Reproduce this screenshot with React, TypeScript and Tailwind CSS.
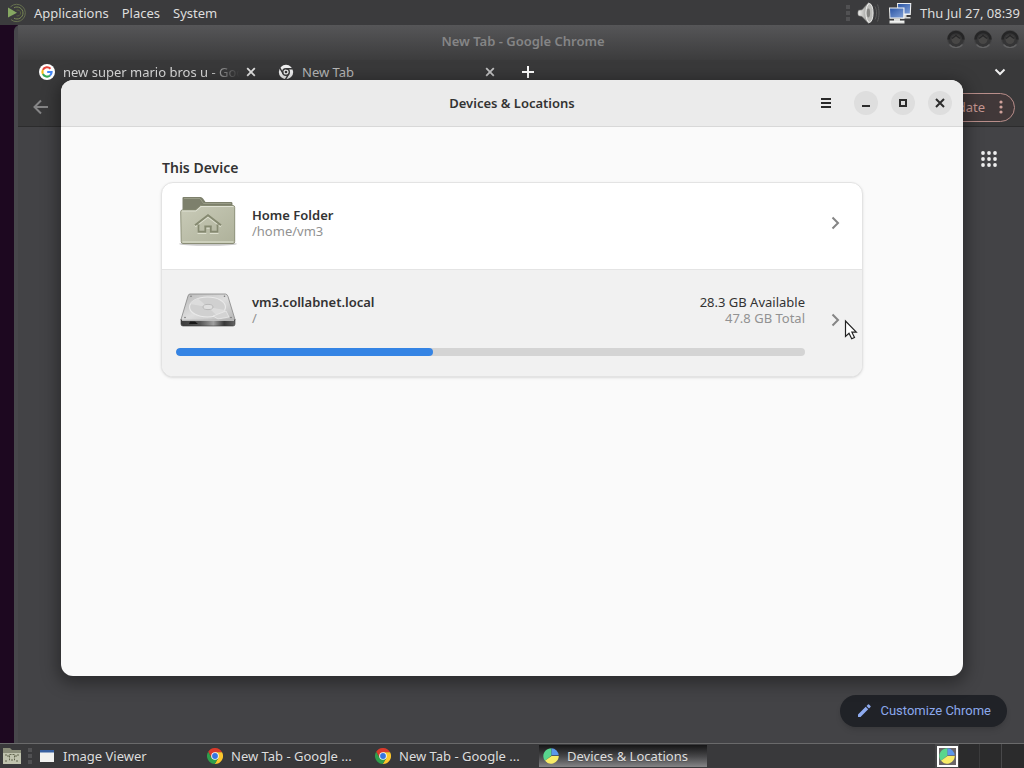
import type { ReactNode } from "react";

function ChromeLogo() {
  return (
    <svg viewBox="0 0 16 16" className="size-4 shrink-0" aria-hidden="true">
      <path d="M8 8 4.710 9.900 1.190 3.800A8 8 0 0 1 15.050 4.200H8Z" fill="#d93a2b" />
      <path d="M8 8V4.200H15.050A8 8 0 0 1 7.770 16L11.290 9.900Z" fill="#fcc62d" />
      <path d="M8 8 11.290 9.900 7.770 16A8 8 0 0 1 1.190 3.800L4.710 9.900Z" fill="#2f9e4b" />
      <circle cx="8" cy="8" r="3.8" fill="#f6f8fb" />
      <circle cx="8" cy="8" r="2.9" fill="#3474e0" />
    </svg>
  );
}

function MonoChromeLogo() {
  return (
    <svg viewBox="0 0 16 16" className="size-4 shrink-0" aria-hidden="true">
      <circle cx="8" cy="8" r="7.2" fill="#f1f1f1" />
      <circle cx="8" cy="8" r="3.3" fill="#f1f1f1" stroke="#3a3a3b" strokeWidth="1.4" />
      <path d="M8 4.700H15M10.860 9.650 7.360 15.700M5.140 9.650 1.640 3.600" stroke="#3a3a3b" strokeWidth="1.400" />
      <circle cx="8" cy="8" r="1.300" fill="#3a3a3b" />
    </svg>
  );
}

function GoogleLogo() {
  return (
    <svg viewBox="0 0 16 16" className="size-4 shrink-0" aria-hidden="true">
      <circle cx="8" cy="8" r="8" fill="#fff" />
      <g fill="none" strokeWidth="2.1">
        <path d="M11.5 4.8A4.6 4.6 0 0 0 3.9 5.9" stroke="#e5443a" />
        <path d="M3.9 5.9A4.6 4.6 0 0 0 3.9 10.1" stroke="#f7bb18" />
        <path d="M3.9 10.1A4.6 4.6 0 0 0 11 11.5" stroke="#36a854" />
        <path d="M11 11.5A4.6 4.6 0 0 0 12.6 8H8.2" stroke="#4285f4" />
      </g>
    </svg>
  );
}

function MenuLogo() {
  return (
    <svg viewBox="0 0 22 20" className="h-5 w-[22px]" fill="none" aria-hidden="true">
      <path d="M4.5 3.8A8.7 8.7 0 1 1 5 16.6" stroke="#66704f" strokeWidth="1" />
      <path d="M8 4.8A6 6 0 1 1 8 15.2" stroke="#7b8b55" strokeWidth="1" />
      <path d="M10.5 7.2A3 3 0 1 1 10.5 12.8" stroke="#59633f" strokeWidth="1" />
      <path d="M2 4.500V14.500L11 9.800Z" fill="#86a862" />
    </svg>
  );
}

function SpeakerIcon() {
  return (
    <svg viewBox="0 0 24 24" className="size-6" aria-hidden="true">
      <defs>
        <linearGradient id="cone" x1="0" x2="1">
          <stop offset="0" stopColor="#f2f2f0" />
          <stop offset="0.6" stopColor="#a9a9a6" />
          <stop offset="1" stopColor="#e2e2e0" />
        </linearGradient>
      </defs>
      <path d="M2.5 9.2 6 8.8 12.5 1.5C16.5 4 16.5 20 12.5 22.5L6 15.5 2.5 14.8C1.6 13 1.6 11 2.5 9.2Z" fill="url(#cone)" stroke="#6d6d6b" strokeWidth=".6" />
      <ellipse cx="13.500" cy="12" rx="3.600" ry="9.400" fill="#bcbcb9" stroke="#f5f5f4" strokeWidth=".9" />
      <ellipse cx="12.400" cy="12" rx="1.700" ry="4.400" fill="#858582" />
      <path d="M19 5.500C21 9 21 15 19 18.500M21.500 3.500C23.500 8.500 23.500 15.500 21.500 20.500" fill="none" stroke="#5c5c5c" />
    </svg>
  );
}

function NetworkIcon() {
  return (
    <svg viewBox="0 0 24 24" className="size-6" aria-hidden="true">
      <defs>
        <linearGradient id="screen" x1="0" x2="1" y1="0" y2="1">
          <stop offset="0" stopColor="#2b55a5" />
          <stop offset="1" stopColor="#7f9fd6" />
        </linearGradient>
      </defs>
      <path d="M9 2H23.3L22.8 14H9.5Z" fill="#f0f1f1" />
      <path d="M10 3H22.2L21.8 12.5H10.4Z" fill="url(#screen)" />
      <path d="M14 14H18.5V16H22.5V17.6H13Z" fill="#d4d5d3" />
      <path d="M1 6.5H16.5V17.8H1.5Z" fill="#f3f4f3" />
      <path d="M2 7.5H15.4L15.2 16.4H2.4Z" fill="url(#screen)" />
      <path d="M6 17.8H12V19.6H16.5V22.4H1.5V19.6H6Z" fill="#dedfdd" />
      <path d="M2 20.2H16V21H2Z" fill="#f8f8f8" />
    </svg>
  );
}

function HomeFolderIcon() {
  return (
    <svg viewBox="0 0 64 64" className="size-16" aria-hidden="true">
      <defs>
        <linearGradient id="folder" x1="0" x2="1" y1="0" y2="1">
          <stop offset="0" stopColor="#c9cbb8" />
          <stop offset="1" stopColor="#aeb19a" />
        </linearGradient>
      </defs>
      <ellipse cx="32" cy="53" rx="29" ry="1.800" fill="#000" opacity=".22" />
      <path d="M6.500 7Q6.500 6 7.500 6H24.500Q26 6 27 7.500L29.500 11H55.500Q56.500 11 56.500 12.500V30H6.500Z" fill="#7d806c" />
      <path d="M8 7.500H24L27.500 12.500H55" fill="none" stroke="#999c87" />
      <path d="M4.700 20.500Q4.700 19 6.500 19H19.500L24.500 14.500H57Q58.700 14.500 58.700 16.500V50.500Q58.700 52.500 57 52.500H7Q5.200 52.500 5.200 50.500Z" fill="url(#folder)" stroke="#85886f" strokeWidth=".9" />
      <path d="M6 20H20L25 15.500H57.500" fill="none" stroke="#e0e2d4" />
      <path d="M6.500 51H57.500" stroke="#d5d8c5" strokeWidth="1.300" />
      <path d="M19 34.200 32 24.200 45 34.200M22.500 33.500V40.800H29.300V35.500H34.800V40.800H41.500V33.500" transform="translate(0 1.200)" fill="none" stroke="#dddfce" strokeWidth="2" />
      <path d="M19 34.200 32 24.200 45 34.200M22.500 33.500V40.800H29.300V35.500H34.800V40.800H41.500V33.500" fill="none" stroke="#858970" strokeWidth="2" />
    </svg>
  );
}

function DriveIcon() {
  return (
    <svg viewBox="0 0 64 64" className="size-16" aria-hidden="true">
      <defs>
        <linearGradient id="plate" x1="0" x2="1" y1="0" y2="1">
          <stop offset="0" stopColor="#b8b8b8" />
          <stop offset="0.5" stopColor="#dedede" />
          <stop offset="1" stopColor="#b4b4b4" />
        </linearGradient>
        <linearGradient id="edge" x1="0" x2="1">
          <stop offset="0" stopColor="#3b3b3b" />
          <stop offset="0.35" stopColor="#555" />
          <stop offset="0.6" stopColor="#a0a0a0" />
          <stop offset="0.8" stopColor="#383838" />
          <stop offset="1" stopColor="#656565" />
        </linearGradient>
      </defs>
      <path d="M14 16H49.500Q51 16 52 18.500L59 41.500 58 43H6L5 41.500 12 18Q12.500 16 14 16Z" fill="url(#plate)" stroke="#858585" strokeWidth=".8" />
      <ellipse cx="31.500" cy="29" rx="18" ry="10" fill="#d0d0d0" stroke="#e9e9e9" strokeWidth="1.200" />
      <path d="M31.500 29 14 26A18 10 0 0 1 22 20.500ZM31.500 29 49 32A18 10 0 0 1 41 37.500Z" fill="#dcdcdc" />
      <ellipse cx="32" cy="29" rx="5" ry="2.600" fill="#dfdfdf" stroke="#b5b5b5" strokeWidth=".9" />
      <path d="M37 38 50 33 53 39 42 41Z" fill="#d3d3d3" stroke="#ededed" strokeWidth=".7" />
      <g fill="#777"><circle cx="15" cy="18.200" r=".8" /><circle cx="48.500" cy="18.200" r=".8" /><circle cx="9" cy="39.500" r=".8" /><circle cx="55" cy="39.500" r=".8" /></g>
      <path d="M5 41.500Q5 42.300 6 42.300H58Q59 42.300 59 41.500V46Q59 48 57 48H7Q5 48 5 46Z" fill="url(#edge)" stroke="#3a3a3a" strokeWidth=".6" />
      <path d="M14 43.500H19L22 46H13Z" fill="#171717" />
      <path d="M6 42.300H58" stroke="#f2f2f2" strokeWidth=".8" />
    </svg>
  );
}

function UsageLogo() {
  return (
    <svg viewBox="0 0 16 16" className="size-4 shrink-0" aria-hidden="true">
      <path d="M8.500 7.500 2 12.800C-1.800 8 1 .6 8.500 .3Z" fill="#58d68d" />
      <path d="M8.500 7.300V.3A7.500 7.500 0 0 1 15.700 7.300Z" fill="#5b97ea" />
      <path d="M2 12.800 8.500 8H15.800A7.800 7.800 0 0 1 2 12.800Z" fill="#f8ec67" />
    </svg>
  );
}

function GripIcon() {
  return (
    <svg viewBox="0 0 4 18" className="h-[18px] w-1 shrink-0" fill="#515153" aria-hidden="true">
      <path d="M0 1H4V5H0ZM0 7H4V11H0ZM0 13H4V17H0Z" />
    </svg>
  );
}

function ChevronIcon() {
  return (
    <svg viewBox="0 0 16 16" className="size-4" fill="none" stroke="#858585" strokeWidth="2" aria-hidden="true">
      <path d="M5.500 2.500 11 8 5.500 13.500" />
    </svg>
  );
}

function PointerIcon() {
  return (
    <svg viewBox="0 0 14 22" className="pointer-events-none absolute top-[49px] right-1 h-[22px] w-[14px]" aria-hidden="true">
      <path d="M1.500 2V17.500L5 14.300 7.700 19.800 10.500 18.500 7.900 13.200H12.300Z" fill="#fff" stroke="#222" strokeWidth="1.200" />
    </svg>
  );
}

function FrameButton({ label }: { label: string }) {
  return (
    <button aria-label={label} className="size-5">
      <svg viewBox="0 0 20 20" className="size-5" fill="none" aria-hidden="true">
        <circle cx="10" cy="10" r="8.500" fill="#353536" stroke="#444445" />
        <path d="M2.500 10.500A7.500 7.500 0 0 1 17.500 10.500" stroke="#252526" strokeWidth="2.500" />
        <path d="M3.500 15.500A8.500 8.500 0 0 0 16.500 15.500" stroke="#626263" strokeWidth="1.200" />
        <circle cx="10" cy="10.500" r="4.500" fill="#484746" />
        <path d="M6 9.500 10 6.500 14 9.500" stroke="#282829" strokeWidth="1.500" />
      </svg>
    </button>
  );
}

function DialogButton({ label, children }: { label: string; children: ReactNode }) {
  return (
    <button aria-label={label} className="size-6 rounded-full bg-[#dedede] text-[#2b2b2b]">
      <svg viewBox="0 0 24 24" className="size-6" fill="none" stroke="currentColor" strokeWidth="2" aria-hidden="true">
        {children}
      </svg>
    </button>
  );
}

function CrossIcon({ color }: { color: string }) {
  return (
    <svg viewBox="0 0 16 16" className="size-4" fill="none" stroke={color} strokeWidth="1.800" aria-hidden="true">
      <path d="M4.200 4.200 11.800 11.800M11.800 4.200 4.200 11.800" />
    </svg>
  );
}

function TaskButton({ icon, label, active = false }: { icon: ReactNode; label: string; active?: boolean }) {
  return (
    <button
      className={
        active
          ? "flex h-[22px] w-[168px] items-center gap-2 bg-linear-to-b from-[#161617] via-[#454547] to-[#858587] px-1"
          : "flex h-[22px] w-[168px] items-center gap-2 px-1"
      }
    >
      {icon}
      <span className="whitespace-nowrap text-shadow-2xs">{label}</span>
    </button>
  );
}

function TopPanel() {
  return (
    <header className="flex h-[25px] shrink-0 items-center justify-between bg-[#3b3b3d] pr-1 pl-[6px]">
      <nav className="flex items-center" aria-label="Desktop menu">
        <MenuLogo />
        <button className="ml-[6px]">Applications</button>
        <button className="ml-[13px]">Places</button>
        <button className="ml-[13px]">System</button>
      </nav>
      <div className="flex items-center">
        <GripIcon />
        <button aria-label="Volume" className="ml-[6px]"><SpeakerIcon /></button>
        <button aria-label="Network" className="ml-2"><NetworkIcon /></button>
        <time className="ml-2">Thu Jul 27, 08:39</time>
      </div>
    </header>
  );
}

function BrowserWindow() {
  return (
    <section aria-label="Browser" className="ml-[14px] flex grow flex-col rounded-tl-md border-l-4 border-[#47474b] bg-[#434346]">
      <div className="flex h-[35px] items-start bg-linear-to-b from-[#565658] to-[#3c3c3d] pl-2">
        <div className="flex-1" />
        <h1 className="pt-[6px] font-semibold text-[#858586]">New Tab - Google Chrome</h1>
        <div className="flex flex-1 justify-end gap-[7px] pt-1 pr-1">
          <FrameButton label="Minimize browser" />
          <FrameButton label="Maximize browser" />
          <FrameButton label="Close browser" />
        </div>
      </div>
      <div className="flex h-6 items-center bg-[#39393a] pr-4 pl-[21px]">
        <GoogleLogo />
        <button className="ml-2 w-[180px] mask-r-from-80% mask-r-to-98% text-left whitespace-nowrap">new super mario bros u - Goo</button>
        <button aria-label="Close search tab"><CrossIcon color="#e5e5e5" /></button>
        <div className="ml-[19px]"><MonoChromeLogo /></div>
        <button className="ml-2 w-[180px] text-left text-[#b9b9ba]">New Tab</button>
        <button aria-label="Close new tab"><CrossIcon color="#c3c3c4" /></button>
        <button aria-label="Add tab" className="ml-[22px]">
          <svg viewBox="0 0 16 16" className="size-4" stroke="#fff" strokeWidth="2" aria-hidden="true"><path d="M2 8H14M8 2V14" /></svg>
        </button>
        <button aria-label="Search tabs" className="ml-auto">
          <svg viewBox="0 0 16 16" className="size-4" fill="none" stroke="#eee" strokeWidth="2" aria-hidden="true"><path d="m3.500 5.500 4.500 4.500 4.500-4.500" /></svg>
        </button>
      </div>
      <div className="flex h-[43px] items-center justify-between border-b border-[#2c2c2d] bg-[#39393a] pt-1 pr-[9px] pl-[15px]">
        <button aria-label="Back">
          <svg viewBox="0 0 16 16" className="size-4" fill="none" stroke="#858586" strokeWidth="2" aria-hidden="true"><path d="M15 8H2M8 1.500 1.500 8 8 14.500" /></svg>
        </button>
        <button className="flex h-[29px] items-center gap-2 rounded-full border border-[#b98e8a] bg-[#413839] pr-[5px] pl-4 text-[#c69792]">
          Update
          <svg viewBox="0 0 16 16" className="size-4" fill="#d0a19b" aria-hidden="true"><circle cx="8" cy="3" r="1.600" /><circle cx="8" cy="8" r="1.600" /><circle cx="8" cy="13" r="1.600" /></svg>
        </button>
      </div>
      <div className="flex grow flex-col items-end justify-between pt-6 pb-4">
        <button aria-label="Apps" className="mr-[27px]">
          <svg viewBox="0 0 16 16" className="size-4" fill="#eee" aria-hidden="true">
            {[2, 8, 14].flatMap((x) => [2, 8, 14].map((y) => <circle key={x + "-" + y} cx={x} cy={y} r="1.900" />))}
          </svg>
        </button>
        <button className="mr-[17px] flex h-8 items-center gap-2 rounded-full bg-[#202227] px-4 font-['Roboto',sans-serif] text-[#8ba8ec] shadow-md">
          <svg viewBox="0 0 16 16" className="size-4" fill="#8eabf0" aria-hidden="true"><path d="M2 11.500 9.700 3.800 12.200 6.300 4.500 14H2ZM10.500 3 12 1.500Q12.500 1 13 1.500L14.500 3Q15 3.500 14.500 4L13 5.500Z" /></svg>
          Customize Chrome
        </button>
      </div>
    </section>
  );
}

function DevicesWindow() {
  return (
    <section aria-label="Disk usage" className="absolute inset-x-[61px] top-[55px] bottom-[67px] flex flex-col overflow-hidden rounded-xl bg-[#fafafa] text-[#333] shadow-[0_4px_16px_4px_rgba(0,0,0,0.35)]">
      <div className="flex h-[47px] shrink-0 items-center border-b border-[#d8d8d8] bg-[#ebebeb] px-[11px]">
        <div className="flex-1" />
        <h2 className="font-semibold">Devices &amp; Locations</h2>
        <div className="flex flex-1 items-center justify-end">
          <button aria-label="Menu">
            <svg viewBox="0 0 16 16" className="size-4" stroke="#292929" strokeWidth="2" aria-hidden="true"><path d="M3 4H13M3 8H13M3 12H13" /></svg>
          </button>
          <div className="ml-5 flex gap-[13px]">
            <DialogButton label="Minimize"><path d="M8 15H16" /></DialogButton>
            <DialogButton label="Maximize"><path d="M9 9H15V15H9Z" /></DialogButton>
            <DialogButton label="Close"><path d="M8 8 16 16M16 8 8 16" /></DialogButton>
          </div>
        </div>
      </div>
      <main className="mx-auto w-full max-w-[702px] pt-[30px]">
        <h3 className="mb-1 pl-px text-sm leading-[21px] font-semibold">This Device</h3>
        <ul className="overflow-hidden rounded-xl border border-[#e3e3e3] bg-white shadow-sm">
          <li className="border-b border-[#e4e4e4]">
            <button className="flex h-[86px] w-full items-center pr-[19px] pb-[6px] pl-[14px] text-left">
              <HomeFolderIcon />
              <span className="ml-3 flex grow flex-col leading-4">
                <span className="font-semibold">Home Folder</span>
                <span className="text-[#929292]">/home/vm3</span>
              </span>
              <ChevronIcon />
            </button>
          </li>
          <li className="relative">
            <button className="flex h-[106px] w-full items-center bg-[#f1f1f1] pr-[19px] pb-[6px] pl-[14px] text-left">
              <span className="flex grow flex-col pb-[6px]">
                <span className="flex items-center">
                  <DriveIcon />
                  <span className="ml-3 flex grow flex-col leading-4">
                    <span className="font-semibold">vm3.collabnet.local</span>
                    <span className="text-[#929292]">/</span>
                  </span>
                  <span className="flex flex-col text-right leading-4">
                    <span>28.3 GB Available</span>
                    <span className="text-[#929292]">47.8 GB Total</span>
                  </span>
                </span>
                <span className="mt-[6px] block h-2 overflow-hidden rounded-full bg-[#d4d4d4]">
                  <span className="block h-full rounded-full bg-[#3584e4]" style={{ width: `${(1 - 28.3 / 47.8) * 100}%` }} />
                </span>
              </span>
              <span className="ml-[22px]"><ChevronIcon /></span>
            </button>
            <PointerIcon />
          </li>
        </ul>
      </main>
    </section>
  );
}

function BottomPanel() {
  return (
    <footer className="flex h-[25px] shrink-0 items-center border-t border-[#6a6a6b] bg-[#39393b]">
      <button aria-label="Files" className="ml-[2px]">
        <svg viewBox="0 0 20 20" className="size-5" aria-hidden="true">
          <path d="M1 2H8L10 4H19V18H1Z" fill="#8b8e7a" />
          <path d="M1 7H19V18H1Z" fill="#c0c3ae" />
          <path d="M7.500 8.500H12.500V14H7.500ZM3 9H6V11M17 9H14V11M3 15H6M14 15H17" fill="none" stroke="#62664f" strokeDasharray="2 1" />
        </svg>
      </button>
      <span className="ml-[6px]"><GripIcon /></span>
      <div className="ml-[3px] flex">
        <TaskButton
          label="Image Viewer"
          icon={
            <svg viewBox="0 0 16 16" className="size-4 shrink-0" aria-hidden="true"><path d="M1 2H15V14H1Z" fill="#f1f1ef" /><path d="M1 2H15V4.500H1Z" fill="#375f9f" /></svg>
          }
        />
        <TaskButton label="New Tab - Google ..." icon={<ChromeLogo />} />
        <TaskButton label="New Tab - Google ..." icon={<ChromeLogo />} />
        <TaskButton label="Devices & Locations" icon={<UsageLogo />} active />
      </div>
      <div className="ml-auto flex h-full bg-[#2b2b2c]">
        <button aria-label="Workspace 1" className="flex w-6 items-center justify-center bg-[#464648]">
          <span className="flex size-[21px] items-center justify-center border-2 border-white bg-[#6b6668]"><UsageLogo /></span>
        </button>
        <button aria-label="Workspace 2" className="w-[21px] border-r border-[#3b3b3c]" />
        <button aria-label="Workspace 3" className="w-[22px] border-r border-[#48484a]" />
        <button aria-label="Workspace 4" className="w-[22px]" />
      </div>
    </footer>
  );
}

export default function App() {
  return (
    <div className="flex min-h-screen flex-col bg-[#3b3b3d] font-['Noto_Sans',sans-serif] text-[13px] leading-5 text-[#dedede]">
      <TopPanel />
      <div className="relative flex grow bg-[#1d0820]">
        <BrowserWindow />
        <DevicesWindow />
      </div>
      <BottomPanel />
    </div>
  );
}
